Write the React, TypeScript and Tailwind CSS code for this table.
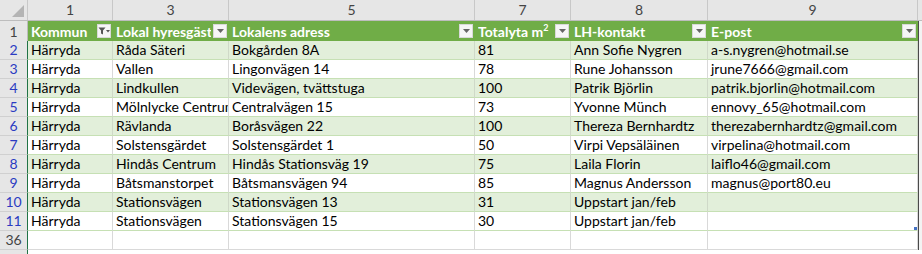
import React from 'react';

const cols = [
  { w: 'w-[85px]', n: '1', title: 'Kommun' },
  { w: 'w-[116px]', n: '3', title: 'Lokal hyresgästförening' },
  { w: 'w-[246px]', n: '5', title: 'Lokalens adress' },
  { w: 'w-[96px]', n: '7', title: 'Totalyta' },
  { w: 'w-[137px]', n: '8', title: 'LH-kontakt' },
  { w: 'w-[210px]', n: '9', title: 'E-post' },
];

const rows: { num: string; cells: string[] }[] = [
  { num: '2', cells: ['Härryda', 'Råda Säteri', 'Bokgården 8A', '81', 'Ann Sofie Nygren', 'a-s.nygren@hotmail.se'] },
  { num: '3', cells: ['Härryda', 'Vallen', 'Lingonvägen 14', '78', 'Rune Johansson', 'jrune7666@gmail.com'] },
  { num: '4', cells: ['Härryda', 'Lindkullen', 'Videvägen, tvättstuga', '100', 'Patrik Björlin', 'patrik.bjorlin@hotmail.com'] },
  { num: '5', cells: ['Härryda', 'Mölnlycke Centrum', 'Centralvägen 15', '73', 'Yvonne Münch', 'ennovy_65@hotmail.com'] },
  { num: '6', cells: ['Härryda', 'Rävlanda', 'Boråsvägen 22', '100', 'Thereza Bernhardtz', 'therezabernhardtz@gmail.com'] },
  { num: '7', cells: ['Härryda', 'Solstensgärdet', 'Solstensgärdet 1', '50', 'Virpi Vepsäläinen', 'virpelina@hotmail.com'] },
  { num: '8', cells: ['Härryda', 'Hindås Centrum', 'Hindås Stationsväg 19', '75', 'Laila Florin', 'laiflo46@gmail.com'] },
  { num: '9', cells: ['Härryda', 'Båtsmanstorpet', 'Båtsmansvägen 94', '85', 'Magnus Andersson', 'magnus@port80.eu'] },
  { num: '10', cells: ['Härryda', 'Stationsvägen', 'Stationsvägen 13', '31', 'Uppstart jan/feb', ''] },
  { num: '11', cells: ['Härryda', 'Stationsvägen', 'Stationsvägen 15', '30', 'Uppstart jan/feb', ''] },
];

function DropButton({ filtered }: { filtered?: boolean }) {
  return (
    <div className="w-[14px] h-[14px] bg-[#f6f6f6] border border-[#d9d9d9] flex items-center justify-center shrink-0">
      {filtered ? (
        <svg width="12" height="10" viewBox="0 0 12 10">
          <path d="M0.5 1.5 H7.5 L5 4.5 V8.5 L3 7.5 V4.5 Z" fill="#555" />
          <path d="M8 4 H12 L10 6.5 Z" fill="#555" />
        </svg>
      ) : (
        <svg width="7" height="4" viewBox="0 0 7 4">
          <path d="M0 0 H7 L3.5 4 Z" fill="#666" />
        </svg>
      )}
    </div>
  );
}

export default function App() {
  return (
    <div className="w-[922px] h-[254px] bg-white overflow-hidden font-['Lato','Liberation_Sans',sans-serif] text-[14px] leading-[18px] text-black">
      {/* column numbers */}
      <div className="flex h-[21px] bg-[#e6e6e6] border-b border-[#bdbdbd] text-[#444]">
        <div className="w-[28px] shrink-0 border-r border-[#c8c8c8] relative">
          <svg className="absolute right-[3px] bottom-[3px]" width="12" height="12" viewBox="0 0 12 12">
            <path d="M12 0 V12 H0 Z" fill="#b4b4b4" />
          </svg>
        </div>
        {cols.map((c) => (
          <div key={c.n} className={`${c.w} shrink-0 border-r border-[#c8c8c8] flex items-center justify-center`}>
            {c.n}
          </div>
        ))}
        <div className="flex-1" />
      </div>

      {/* table header */}
      <div className="flex h-[20px]">
        <div className="w-[28px] shrink-0 bg-[#e6e6e6] border-r border-[#bdbdbd] flex items-center justify-center pt-[1px] text-[#444]">
          1
        </div>
        {cols.map((c, i) => (
          <div key={c.n} className={`${c.w} shrink-0 bg-[#70ad47] flex items-center pl-[3px] pr-[2px] gap-[2px]`}>
            <div className="flex-1 overflow-hidden whitespace-nowrap font-bold text-white pt-[1px]">
              {c.title}
              {i === 3 && (
                <>
                  {' m'}
                  <span className="inline-block text-[9px] leading-[9px] align-top">2</span>
                </>
              )}
            </div>
            <DropButton filtered={i === 0} />
          </div>
        ))}
        <div className="flex-1 border-l border-[#4a4a4a] bg-[#f3f3f3]" />
      </div>

      {/* data rows */}
      {rows.map((r, ri) => {
        const band = ri % 2 === 0;
        return (
          <div key={r.num} className="flex h-[19px]">
            <div className="w-[28px] shrink-0 bg-[#e6e6e6] border-r border-[#217346] border-b border-b-[#d0d0d0] flex items-center justify-center text-[#2b3bc2]">
              {r.num}
            </div>
            {r.cells.map((v, ci) => (
              <div
                key={ci}
                className={`${cols[ci].w} shrink-0 border-r border-b ${
                  band ? 'bg-[#e2efda] border-r-[#cfd9c8]' : 'bg-white border-r-[#d9d9d9]'
                } border-b-[#c6e0b4] flex items-center pl-[3px] overflow-hidden whitespace-nowrap`}
              >
                {v}
              </div>
            ))}
            <div className="flex-1 border-l border-[#4a4a4a] bg-[#f3f3f3] relative">
              {ri === rows.length - 1 && (
                <div className="absolute -left-[5px] bottom-[1px] w-[3px] h-[3px] bg-[#4472c4]" />
              )}
            </div>
          </div>
        );
      })}

      {/* empty row 36 */}
      <div className="flex h-[19px]">
        <div className="w-[28px] shrink-0 bg-[#e6e6e6] border-r border-[#217346] border-b border-b-[#d0d0d0] flex items-center justify-center text-[#444]">
          36
        </div>
        {cols.map((c) => (
          <div key={c.n} className={`${c.w} shrink-0 border-r border-b border-r-[#d9d9d9] border-b-[#d9d9d9] bg-white`} />
        ))}
        <div className="flex-1 border-l border-[#4a4a4a] bg-[#f3f3f3]" />
      </div>
      <div className="flex h-[4px]">
        <div className="w-[28px] shrink-0 bg-[#e6e6e6] border-r border-[#217346]" />
        <div className="flex-1 bg-white" />
      </div>
    </div>
  );
}
